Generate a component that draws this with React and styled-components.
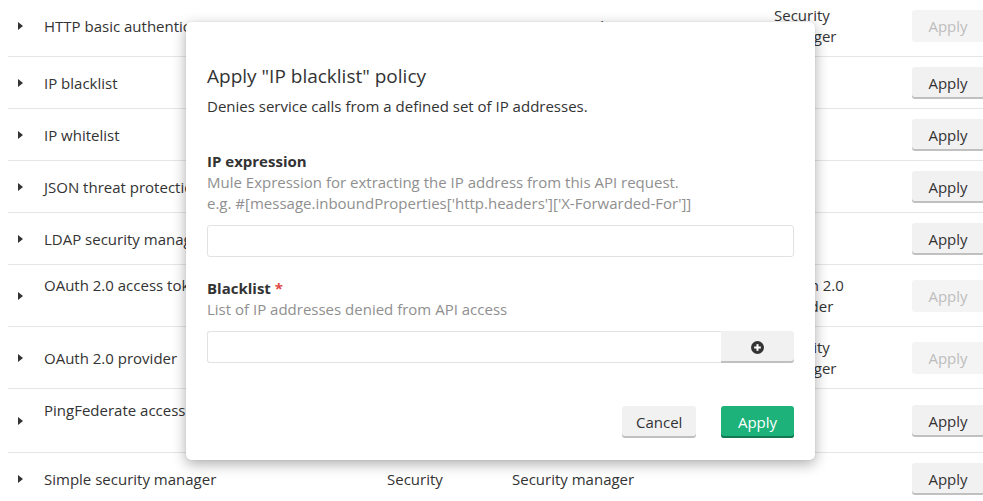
import React from "react";
import styled, { createGlobalStyle } from "styled-components";

const GlobalStyle = createGlobalStyle`
  html, body { margin: 0; padding: 0; background: #fff; }
  body {
    font-family: "Open Sans", "Noto Sans", "Liberation Sans", sans-serif;
    font-size: 15px;
    color: #333;
    -webkit-font-smoothing: antialiased;
  }
  * { box-sizing: border-box; }
`;

const Page = styled.div`
  position: relative;
  width: 983px;
  height: 501px;
  overflow: hidden;
`;

const PolicyList = styled.div`
  margin-top: -5px;
`;

const Row = styled.div`
  display: grid;
  grid-template-columns: 36px 343px 125px 262px 138px 72px;
  align-items: center;
  margin-left: 8px;
  padding: 10px 0 9px;
  min-height: ${(p) => (p.$tall ? 64 : 52)}px;
  border-bottom: 1px solid #e6e6e6;
  line-height: 21px;
`;

const Caret = styled.span`
  display: block;
  width: 0;
  height: 0;
  margin-left: 10px;
  border-top: 4px solid transparent;
  border-bottom: 4px solid transparent;
  border-left: 5px solid #333;
`;

const NameCell = styled.div`
  padding-bottom: ${(p) => (p.$raised ? "21px" : "0")};
`;

const Cell = styled.div``;

const ScopeCell = styled.div`
  padding-right: 40px;
`;

const GreyButton = styled.button`
  font-family: inherit;
  font-size: 15px;
  height: 32px;
  padding: 0 14px;
  border: none;
  border-radius: 3px;
  cursor: pointer;
  color: ${(p) => (p.disabled ? "#bdbdbd" : "#333")};
  background: ${(p) => (p.disabled ? "#f4f4f4" : "#f1f1f1")};
  box-shadow: ${(p) =>
    p.disabled ? "none" : "inset 0 -2px 0 rgba(0, 0, 0, 0.2)"};
`;

const RowButton = styled(GreyButton)`
  width: 72px;
`;

const Modal = styled.div`
  position: absolute;
  left: 186px;
  top: 22px;
  width: 629px;
  height: 438px;
  background: #fff;
  border-radius: 5px;
  box-shadow: 0 4px 14px rgba(0, 0, 0, 0.32), 0 0 1px rgba(0, 0, 0, 0.25);
  padding: 41px 21px 22px;
  display: flex;
  flex-direction: column;
`;

const Title = styled.h2`
  margin: 0;
  font-size: 19px;
  font-weight: 400;
  line-height: 26px;
  color: #333;
`;

const Subtitle = styled.p`
  margin: 7px 0 0;
  line-height: 21px;
  color: #333;
`;

const Field = styled.div`
  margin-top: ${(p) => p.$gap}px;
  display: flex;
  flex-direction: column;
`;

const Label = styled.label`
  font-weight: 700;
  line-height: 21px;
  color: #333;
`;

const Required = styled.span`
  color: #e0473f;
`;

const Hint = styled.div`
  color: #8f8f8f;
  line-height: 21px;
`;

const TextInput = styled.input`
  margin-top: 11px;
  height: 32px;
  width: 100%;
  border: 1px solid #e2e2e2;
  border-radius: 3px;
  font-family: inherit;
  font-size: 15px;
  padding: 0 10px;
  outline: none;
`;

const InputGroup = styled.div`
  margin-top: 11px;
  display: flex;
  height: 32px;
`;

const GroupInput = styled.input`
  flex: 1;
  height: 32px;
  border: 1px solid #e2e2e2;
  border-right: none;
  border-radius: 3px 0 0 3px;
  font-family: inherit;
  font-size: 15px;
  padding: 0 10px;
  outline: none;
`;

const AddButton = styled(GreyButton)`
  width: 73px;
  border-radius: 0 3px 3px 0;
  display: flex;
  align-items: center;
  justify-content: center;
`;

const Footer = styled.div`
  margin-top: auto;
  display: flex;
  justify-content: flex-end;
  gap: 25px;
`;

const CancelButton = styled(GreyButton)`
  width: 74px;
`;

const PrimaryButton = styled.button`
  font-family: inherit;
  font-size: 15px;
  height: 32px;
  width: 73px;
  border: none;
  border-radius: 3px;
  color: #fff;
  background: #1cb27a;
  box-shadow: inset 0 -2px 0 #117a52;
  cursor: pointer;
`;

const PlusCircle = () => (
  <svg width="13" height="13" viewBox="0 0 14 14" aria-hidden="true">
    <circle cx="7" cy="7" r="7" fill="#333" />
    <rect x="3.4" y="5.9" width="7.2" height="2.2" fill="#fff" />
    <rect x="5.9" y="3.4" width="2.2" height="7.2" fill="#fff" />
  </svg>
);

const policies = [
  { name: "HTTP basic authentication", category: "Security", desc: "Requires authentication", scope: "Security manager", disabled: true },
  { name: "IP blacklist", category: "", desc: "", scope: "" },
  { name: "IP whitelist", category: "", desc: "", scope: "" },
  { name: "JSON threat protection", category: "", desc: "", scope: "" },
  { name: "LDAP security manager", category: "", desc: "", scope: "" },
  { name: "OAuth 2.0 access token enforcement", category: "", desc: "", scope: "OAuth 2.0 provider", disabled: true, raised: true },
  { name: "OAuth 2.0 provider", category: "", desc: "", scope: "Security manager", disabled: true },
  { name: "PingFederate access token enforcement", category: "", desc: "", scope: "", raised: true, tall: true },
  { name: "Simple security manager", category: "Security", desc: "Security manager", scope: "" },
];

export default function App() {
  return (
    <>
      <GlobalStyle />
      <Page>
        <PolicyList>
          {policies.map((p) => (
            <Row key={p.name} $tall={p.tall}>
              <Caret />
              <NameCell $raised={p.raised}>{p.name}</NameCell>
              <Cell>{p.category}</Cell>
              <Cell>{p.desc}</Cell>
              <ScopeCell>{p.scope}</ScopeCell>
              <RowButton disabled={p.disabled}>Apply</RowButton>
            </Row>
          ))}
        </PolicyList>

        <Modal role="dialog">
          <Title>Apply "IP blacklist" policy</Title>
          <Subtitle>Denies service calls from a defined set of IP addresses.</Subtitle>

          <Field $gap={34}>
            <Label>IP expression</Label>
            <Hint>Mule Expression for extracting the IP address from this API request.</Hint>
            <Hint>e.g. #[message.inboundProperties['http.headers']['X-Forwarded-For']]</Hint>
            <TextInput type="text" />
          </Field>

          <Field $gap={21}>
            <Label>
              Blacklist <Required>*</Required>
            </Label>
            <Hint>List of IP addresses denied from API access</Hint>
            <InputGroup>
              <GroupInput type="text" />
              <AddButton aria-label="Add">
                <PlusCircle />
              </AddButton>
            </InputGroup>
          </Field>

          <Footer>
            <CancelButton>Cancel</CancelButton>
            <PrimaryButton>Apply</PrimaryButton>
          </Footer>
        </Modal>
      </Page>
    </>
  );
}
